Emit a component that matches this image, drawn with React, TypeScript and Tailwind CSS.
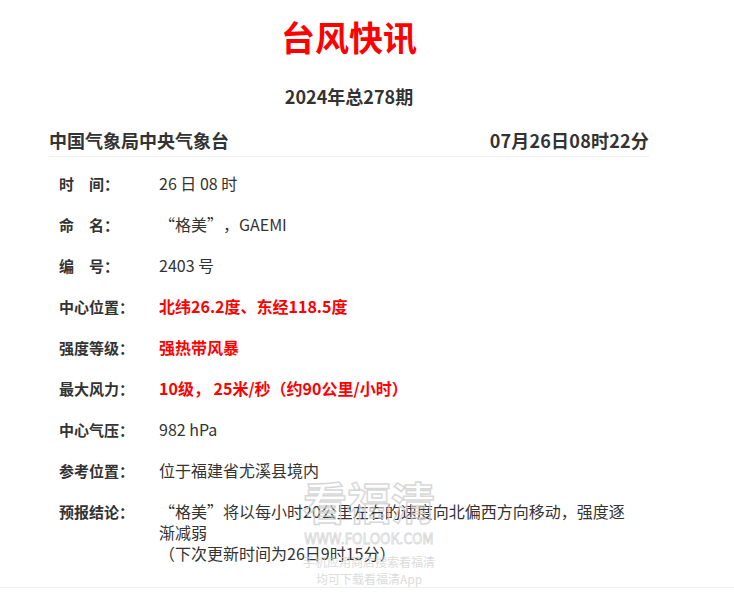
import React from 'react'

type Row = { label: string; value: React.ReactNode; red?: boolean }

// full-width quote cells, as the original font draws them
const LQ = () => <span className="inline-block w-[16px] text-right">“</span>
const RQ = () => <span className="inline-block w-[16px] text-left">”</span>

const rows: Row[] = [
  { label: '时　间：', value: '26 日 08 时' },
  {
    label: '命　名：',
    value: (
      <>
        <LQ />格美<RQ />，GAEMI
      </>
    ),
  },
  { label: '编　号：', value: '2403 号' },
  { label: '中心位置：', value: '北纬26.2度、东经118.5度', red: true },
  { label: '强度等级：', value: '强热带风暴', red: true },
  { label: '最大风力：', value: '10级， 25米/秒（约90公里/小时）', red: true },
  { label: '中心气压：', value: '982 hPa' },
  { label: '参考位置：', value: '位于福建省尤溪县境内' },
  {
    label: '预报结论：',
    value: (
      <>
        <LQ />格美<RQ />将以每小时20公里左右的速度向北偏西方向移动，强度逐渐减弱
        <br />
        （下次更新时间为26日9时15分）
      </>
    ),
  },
]

export default function App() {
  return (
    <div className="relative min-h-[602px] bg-white font-['Noto_Sans_CJK_SC','Noto_Sans',sans-serif] text-[#333]">
      <div className="mx-auto w-[600px] pt-[15px] -translate-x-[18px]">
        <h1 className="text-center text-[34px] font-bold leading-[44px] text-[#ff0000]">台风快讯</h1>
        <div className="mt-[25px] text-center text-[18px] font-bold leading-[24px]">2024年总278期</div>
        <div className="mt-[20px] flex items-center justify-between border-b border-[#eeeeee] pb-[4px] text-[18px] font-bold leading-[24px]">
          <span>中国气象局中央气象台</span>
          <span className="tracking-[0.2px]">07月26日08时22分</span>
        </div>
        <div className="pt-[6px]">
          {rows.map((r) => (
            <div key={r.label} className="flex items-baseline py-[10px] pl-[10px] leading-[21px]">
              <div className="w-[100px] shrink-0 text-[15px] font-bold">{r.label}</div>
              <div className={`w-[472px] text-[16px] ${r.red ? 'font-bold text-[#ff0000]' : ''}`}>{r.value}</div>
            </div>
          ))}
        </div>
      </div>
      <div className="mt-[13px] border-t border-[#eeeeee]" />

      {/* watermark overlay */}
      <div className="pointer-events-none absolute left-[298px] top-[472px] flex w-[142px] flex-col items-center whitespace-nowrap text-[#d4d4d4] opacity-80">
        <div className="text-[44px] font-bold leading-[58px] text-transparent [-webkit-text-stroke:1.5px_#cfcfcf]">看福清</div>
        <div className="text-[14px] leading-[16px] text-transparent [-webkit-text-stroke:0.8px_#cfcfcf]">WWW.FOLOOK.COM</div>
        <div className="mt-[7px] text-[12px] leading-[17px]">手机应用商店搜索看福清</div>
        <div className="text-[12px] leading-[17px]">均可下载看福清App</div>
      </div>
    </div>
  )
}
